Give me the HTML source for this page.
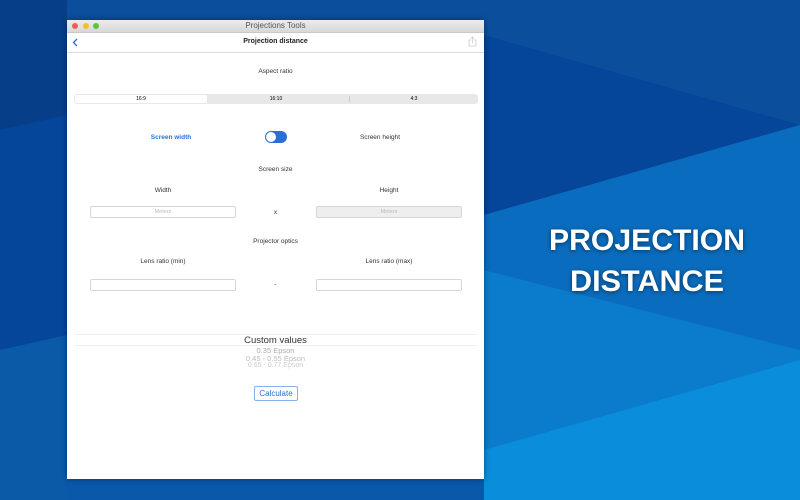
<!DOCTYPE html>
<html><head><meta charset="utf-8"><style>
body{margin:0;width:800px;height:500px;overflow:hidden;position:relative;font-family:"Liberation Sans",sans-serif;}
svg.bg{position:absolute;left:0;top:0}
.win{position:absolute;left:67px;top:20px;width:417px;height:459px;background:#fff;box-shadow:0 0 6px rgba(0,0,0,.4);}
.tb{height:12px;background:linear-gradient(#ececec,#d8d8d8);border-bottom:1px solid #c8c8c8;text-align:center;font-size:8px;color:#555;line-height:12px;position:relative}
.dot{position:absolute;top:3px;width:6px;height:6px;border-radius:50%}
.t{position:absolute;font-size:6.5px;color:#333;text-align:center}
.inp{position:absolute;height:10px;border:1px solid #d6d6d6;border-radius:2px;font-size:5.5px;color:#bbb;text-align:center;line-height:10px;background:#fff}
</style></head><body>
<svg class="bg" width="800" height="500">
<rect width="800" height="500" fill="#0a58aa"/>
<polygon points="0,0 800,0 800,125 484,35 0,130" fill="#0b4f9c"/>
<polygon points="0,0 67,0 67,500 0,500" fill="#063f88"/>
<polygon points="0,130 67,115 67,340 0,350" fill="#05469a"/>
<polygon points="0,350 67,335 67,500 0,500" fill="#0a5aa8"/>
<polygon points="484,35 800,125 484,215" fill="#05459a"/>
<polygon points="484,215 800,125 800,350 484,270" fill="#0a6cbe"/>
<polygon points="484,270 800,350 800,500 484,500" fill="#0b7ccb"/>
<polygon points="484,450 800,360 800,500 484,500" fill="#0a8ddb"/>
<g style="filter:drop-shadow(0 1px 2px rgba(0,0,0,.5))">
<text x="647" y="250" fill="#fff" font-family="Liberation Sans" font-weight="bold" font-size="30" text-anchor="middle" textLength="196" lengthAdjust="spacingAndGlyphs">PROJECTION</text>
<text x="647" y="291" fill="#fff" font-family="Liberation Sans" font-weight="bold" font-size="30" text-anchor="middle" textLength="154" lengthAdjust="spacingAndGlyphs">DISTANCE</text></g>
</svg>
<div class="win">
<div class="tb">Projections Tools
<span class="dot" style="left:5px;background:#ec5f57"></span><span class="dot" style="left:16px;background:#f5bd30"></span><span class="dot" style="left:26px;background:#5fc43c"></span></div>
<div style="position:absolute;top:13px;left:0;right:0;height:19px;border-bottom:1px solid #ddd;text-align:center;font-size:7px;font-weight:bold;color:#222;line-height:17px">Projection distance
<svg style="position:absolute;left:5px;top:5px" width="6" height="9"><path d="M5 1 L1.5 4.5 L5 8" stroke="#2a6fd8" stroke-width="1.3" fill="none"/></svg>
<svg style="position:absolute;right:7px;top:3px" width="9" height="11"><path d="M3 4 H1 V10 H8 V4 H6 M4.5 7 V1 M3 2.5 L4.5 1 L6 2.5" stroke="#ccc" stroke-width="0.8" fill="none"/></svg></div>
<div class="t" style="left:0;width:417px;top:48px">Aspect ratio</div>
<div style="position:absolute;left:7px;top:74px;width:404px;height:10px;background:#e8e8e8;border-radius:3px;font-size:5px;line-height:10px">
<div style="position:absolute;left:1px;top:1px;width:132px;height:8px;background:#fff;border-radius:2px;text-align:center;line-height:8px">16:9</div>
<div style="position:absolute;left:135px;width:134px;text-align:center">16:10</div>
<div style="position:absolute;left:275px;top:2px;height:6px;border-left:1px solid #ccc"></div>
<div style="position:absolute;left:276px;width:128px;text-align:center">4:3</div></div>
<div class="t" style="left:64px;width:80px;top:114px;color:#2a6fd8;font-weight:bold">Screen width</div>
<div style="position:absolute;left:198px;top:111px;width:22px;height:12px;background:#2a6fd8;border-radius:6px"><div style="position:absolute;left:1px;top:1px;width:10px;height:10px;background:#fff;border-radius:50%"></div></div>
<div class="t" style="left:273px;width:80px;top:114px">Screen height</div>
<div class="t" style="left:0;width:417px;top:146px">Screen size</div>
<div class="t" style="left:56px;width:80px;top:167px">Width</div>
<div class="t" style="left:282px;width:80px;top:167px">Height</div>
<div class="inp" style="left:23px;top:186px;width:144px">Meters</div>
<div class="t" style="left:200px;width:17px;top:189px">x</div>
<div class="inp" style="left:249px;top:186px;width:144px;background:#eee">Meters</div>
<div class="t" style="left:0;width:417px;top:218px">Projector optics</div>
<div class="t" style="left:56px;width:80px;top:238px">Lens ratio (min)</div>
<div class="t" style="left:282px;width:80px;top:238px">Lens ratio (max)</div>
<div class="inp" style="left:23px;top:259px;width:144px"></div>
<div class="t" style="left:200px;width:17px;top:261px">-</div>
<div class="inp" style="left:249px;top:259px;width:144px"></div>
<div style="position:absolute;left:7px;width:404px;top:314px;border-top:1px solid #eee"></div>
<div style="position:absolute;left:7px;width:404px;top:325px;border-top:1px solid #eee"></div>
<div style="position:absolute;left:0;width:417px;top:315px;text-align:center;font-size:9.5px;color:#333">Custom values</div>
<div style="position:absolute;left:0;width:417px;top:326px;text-align:center;font-size:7.5px;color:#aaa">0.35 Epson</div>
<div style="position:absolute;left:0;width:417px;top:334px;text-align:center;font-size:7.5px;color:#bbb">0.45 - 0.55 Epson</div>
<div style="position:absolute;left:0;width:417px;top:342px;text-align:center;font-size:7px;color:#ccc;height:7px;overflow:hidden">0.65 - 0.77 Epson</div>
<div style="position:absolute;left:187px;top:366px;width:42px;height:13px;border:1px solid #8ab0e8;border-radius:2px;color:#2a6fd8;font-size:8px;text-align:center;line-height:13px">Calculate</div>
</div>
</body></html>
